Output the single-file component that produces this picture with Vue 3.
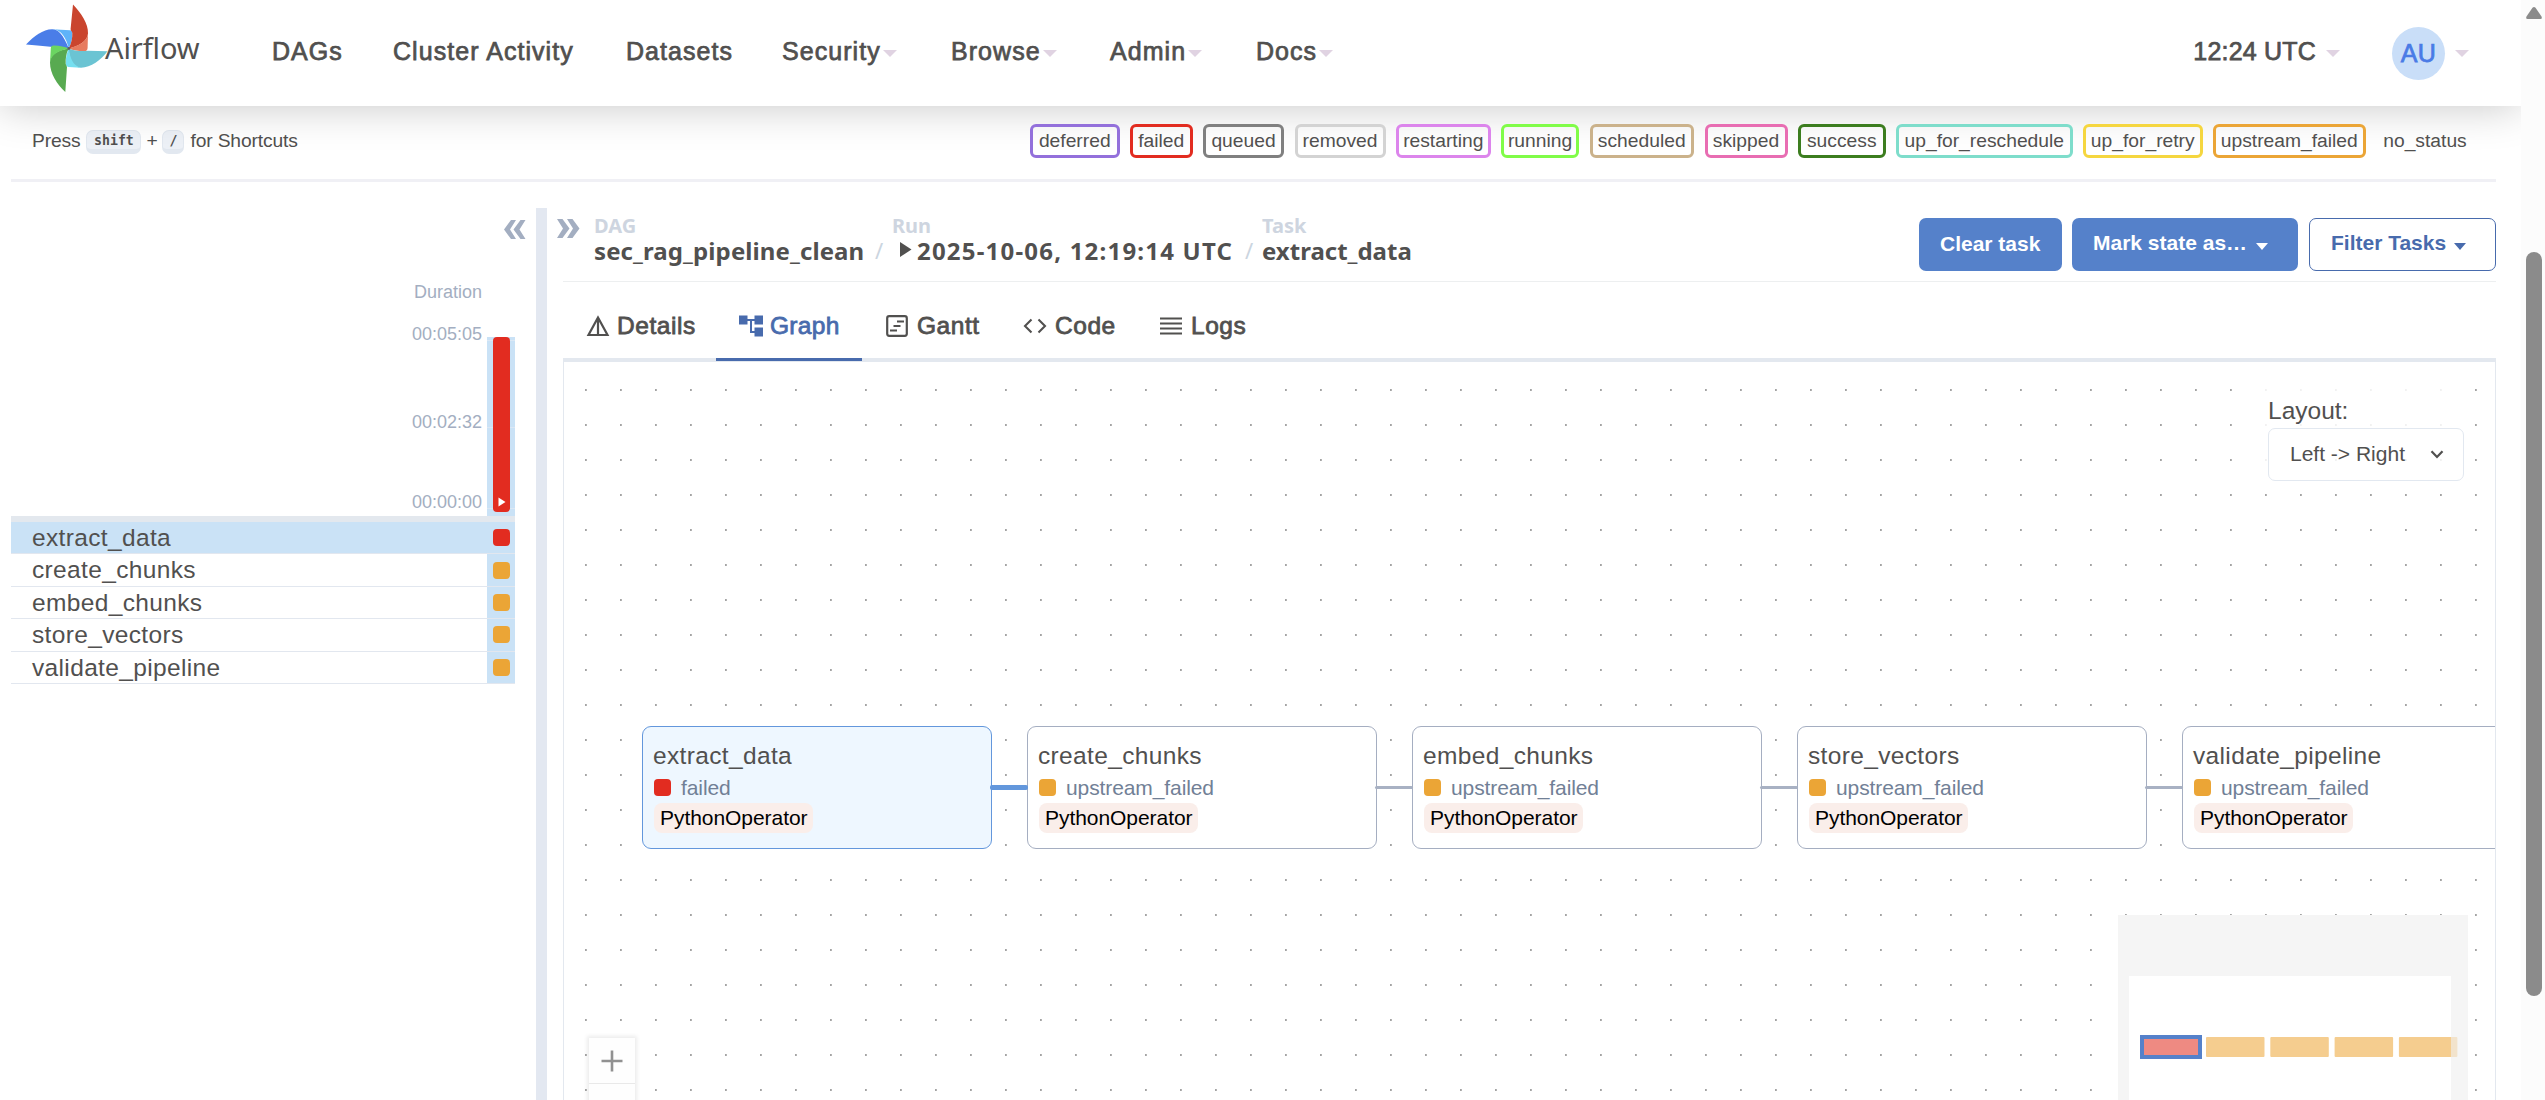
<script setup>
const nav = [
  { label: 'DAGs', width: 121 },
  { label: 'Cluster Activity', width: 233 },
  { label: 'Datasets', width: 156 },
  { label: 'Security', width: 169, caret: true },
  { label: 'Browse', width: 159, caret: true },
  { label: 'Admin', width: 146, caret: true },
  { label: 'Docs', width: 120, caret: true },
]

const states = [
  { name: 'deferred', color: '#9370db', width: 89.5 },
  { name: 'failed', color: '#e22c20', width: 62.5 },
  { name: 'queued', color: '#808080', width: 81 },
  { name: 'removed', color: '#d3d3d3', width: 91 },
  { name: 'restarting', color: '#dc85ec', width: 94.5 },
  { name: 'running', color: '#80fc48', width: 78 },
  { name: 'scheduled', color: '#cbb28b', width: 104.5 },
  { name: 'skipped', color: '#e86db2', width: 83 },
  { name: 'success', color: '#3c7d1f', width: 87.5 },
  { name: 'up_for_reschedule', color: '#7eddcb', width: 176.5 },
  { name: 'up_for_retry', color: '#f5d63f', width: 119.5 },
  { name: 'upstream_failed', color: '#eba536', width: 152.5 },
  { name: 'no_status', color: 'transparent', width: 98 },
]

const tasks = [
  { name: 'extract_data', state: 'failed' },
  { name: 'create_chunks', state: 'upstream_failed' },
  { name: 'embed_chunks', state: 'upstream_failed' },
  { name: 'store_vectors', state: 'upstream_failed' },
  { name: 'validate_pipeline', state: 'upstream_failed' },
]

// Graph coordinates are relative to the canvas' inner top-left corner.
const nodeX = (i) => 78 + i * 385
const edges = [0, 1, 2, 3].map((i) => ({ x: nodeX(i) + 348, selected: i === 0 }))
</script>

<template>
  <div class="window">
    <main class="page">
      <header class="navbar">
        <div class="brand">
          <svg class="logo" width="84" height="92" viewBox="25 3 84 92">
            <path d="M26 44.600C34 36 43 29.500 52 29.300C58 29.200 63 34 68.800 48.500C54 47 42 46 26 44.600Z" fill="#4a7de8" />
            <path d="M52 29.300L70 30.200Q72.500 30.500 72.300 34C72.300 40 71 44 68.800 48.500C66 38 62 30 52 29.300Z" fill="#5fb3f9" />
            <path d="M73 4.600C81 13 88.500 24 88 33.500C87.500 41 79 46 68.800 48.500C71.500 43 72.500 38 72.300 33C72 31 70.600 31 70.600 29Z" fill="#ca452e" />
            <path d="M88 33.500L87.600 48Q87.300 51.500 84 51.300C78 51.200 73 50.500 68.800 48.500C79 45 87 42 88 33.500Z" fill="#e77b5f" />
            <path d="M107.500 51.200C101 60 91 67.600 81 67.700C73 67.500 69 60 68.800 48.500C75 51.500 82 51.300 88 50.800Z" fill="#6bc4d3" />
            <path d="M81 67.700L68.500 67Q65.500 66.500 65.700 63C65.800 57 67 52 68.800 48.500C70 58 73 66 81 67.700Z" fill="#75dff0" />
            <path d="M65.300 92C57 84 50 74 50 62.500C50 54 58 50.500 68.800 48.500C66 53 65.500 59 65.700 64L67 67Z" fill="#58aa51" />
            <path d="M50 62.500L50.800 48Q51 45.200 54 45.400C60 45.600 65 46.500 68.800 48.500C60 50.500 51 54 50 62.500Z" fill="#6bd562" />
            <circle cx="68.800" cy="48.500" r="1.400" fill="#5b5b62" />
          </svg>
          <span class="brand-name">Airflow</span>
        </div>
        <nav class="menu">
          <a v-for="n in nav" :key="n.label" class="menu-item" :style="{ width: n.width + 'px' }">
            <span>{{ n.label }}</span><i v-if="n.caret" class="caret"></i>
          </a>
        </nav>
        <div class="clock"><span>12:24 UTC</span><i class="caret"></i></div>
        <div class="user"><span class="avatar">AU</span><i class="caret"></i></div>
      </header>

      <section class="legend">
        <div class="shortcuts">
          <span>Press</span><kbd class="kbd-shift">shift</kbd><span class="plus">+</span><kbd class="kbd-slash">/</kbd><span>for Shortcuts</span>
        </div>
        <div class="states">
          <span v-for="s in states" :key="s.name" class="state" :style="{ borderColor: s.color, width: s.width + 'px' }">{{ s.name }}</span>
        </div>
      </section>

      <section class="content">
        <aside class="grid-view">
          <svg class="collapse" width="22" height="19" viewBox="0 0 22 19"><path d="M7 0h5L6 9.500l6 9.500H7L0 9.500zM16.500 0H21.500l-6 9.500 6 9.500h-5L9.500 9.500z" fill="#a3aec1" /></svg>
          <div class="chart">
            <div class="axis">
              <span class="axis-title">Duration</span>
              <span class="tick-max">00:05:05</span>
              <span class="tick-mid">00:02:32</span>
              <span class="tick-min">00:00:00</span>
            </div>
            <div class="run-column">
              <div class="run-bar">
                <svg width="8" height="10" viewBox="0 0 8 10"><path d="M.5.500v9l7-4.500z" fill="#fff" /></svg>
              </div>
            </div>
          </div>
          <div class="rows">
            <div v-for="(t, i) in tasks" :key="t.name" class="row" :class="{ active: i === 0 }">
              <span class="row-name">{{ t.name }}</span>
              <span class="cell"><i class="box" :class="t.state"></i></span>
            </div>
          </div>
        </aside>

        <div class="splitter"></div>

        <article class="details">
          <div class="heading">
            <svg class="expand" width="23" height="19" viewBox="0 0 23 19"><path d="M0 0h5.500l7 9.500-7 9.500H0l6-9.500zM10 0h5.500l7 9.500-7 9.500H10l6-9.500z" fill="#a3aec1" /></svg>
            <div class="crumbs">
              <div class="crumb c-dag"><span class="crumb-label">DAG</span><strong>sec_rag_pipeline_clean</strong></div>
              <span class="slash s1">/</span>
              <div class="crumb c-run">
                <span class="crumb-label">Run</span>
                <strong><svg class="manual" width="13" height="15" viewBox="0 0 13 15"><path d="M1 0v15L12.500 7.500z" fill="#51504f" /></svg>2025-10-06, 12:19:14 UTC</strong>
              </div>
              <span class="slash s2">/</span>
              <div class="crumb c-task"><span class="crumb-label">Task</span><strong>extract_data</strong></div>
            </div>
            <div class="actions">
              <button class="btn solid clear">Clear task</button>
              <button class="btn solid mark">Mark state as…<i class="tri"></i></button>
              <button class="btn outline filter">Filter Tasks<i class="tri"></i></button>
            </div>
          </div>

          <div class="tabs">
            <div class="tab t-details">
              <svg width="24" height="22" viewBox="0 0 24 22"><path d="M12 2.500L2.500 20h19zM12 2.500V20" fill="none" stroke="#51504f" stroke-width="2.200" /></svg><span>Details</span>
            </div>
            <div class="tab t-graph selected">
              <svg width="24" height="22" viewBox="0 0 24 22"><path d="M0 .500h8.500v9H0zM15.500.500H24v9h-8.500zM15.500 12.500H24v9h-8.500z" fill="#486bad" /><path d="M8 5h8M12 5v12h4" fill="none" stroke="#486bad" stroke-width="2" /></svg><span>Graph</span>
            </div>
            <div class="tab t-gantt">
              <svg width="22" height="22" viewBox="0 0 22 22"><rect x="1.200" y="1.200" width="19.600" height="19.600" rx="2" fill="none" stroke="#51504f" stroke-width="2.200" /><path d="M11 6.500h7M7.500 11h7M4 15.500h7" stroke="#51504f" stroke-width="2" /></svg><span>Gantt</span>
            </div>
            <div class="tab t-code">
              <svg width="24" height="16" viewBox="0 0 24 16"><path d="M8.500 1.500L2 8l6.500 6.500M15.500 1.500L22 8l-6.500 6.500" fill="none" stroke="#51504f" stroke-width="2.100" /></svg><span>Code</span>
            </div>
            <div class="tab t-logs">
              <svg width="22" height="18" viewBox="0 0 22 18"><path d="M0 1.500h22M0 6.500h22M0 11.500h22M0 16.500h22" stroke="#51504f" stroke-width="2.200" /></svg><span>Logs</span>
            </div>
          </div>

          <div class="canvas">
            <svg class="dots" width="1931" height="738">
              <defs>
                <pattern id="dot-grid" x="21" y="27" width="35" height="35" patternUnits="userSpaceOnUse">
                  <rect x="0" y="0" width="1.800" height="2" fill="#a3a3a3" />
                </pattern>
              </defs>
              <rect width="1931" height="738" fill="url(#dot-grid)" />
            </svg>

            <div v-for="(t, i) in tasks" :key="t.name" class="node" :class="{ current: i === 0 }" :style="{ left: nodeX(i) + 'px' }">
              <span class="node-name">{{ t.name }}</span>
              <span class="node-state"><i class="box" :class="t.state"></i>{{ t.state }}</span>
              <span class="operator">PythonOperator</span>
            </div>
            <i v-for="e in edges" :key="e.x" class="edge" :class="{ live: e.selected }" :style="{ left: e.x + 'px' }"></i>

            <div class="layout-panel">
              <label>Layout:</label>
              <div class="select">
                <span>Left -&gt; Right</span>
                <svg width="14" height="9" viewBox="0 0 14 9"><path d="M1.500 1.200L7 7l5.500-5.800" fill="none" stroke="#51504f" stroke-width="2.200" /></svg>
              </div>
            </div>

            <div class="controls">
              <div class="control"><svg width="22" height="22" viewBox="0 0 22 22"><path d="M11 .500v21M.5 11h21" stroke="#919191" stroke-width="2.600" /></svg></div>
              <div class="control"></div>
            </div>

            <svg class="minimap" width="350" height="185" viewBox="0 0 350 185">
              <rect width="350" height="185" fill="#fff" />
              <rect v-for="i in 4" :key="i" :x="88 + (i - 1) * 64.300" y="122" width="58.500" height="20" rx="1" fill="#f5cd8f" />
              <rect x="24" y="122" width="58" height="20" fill="#ee8a82" stroke="#5581ca" stroke-width="4" />
              <path d="M0 0h350v185H0zM11 61v124h322V61z" fill="#f0f0f0" fill-opacity=".64" fill-rule="evenodd" />
            </svg>
          </div>
        </article>
      </section>
    </main>

    <div class="scrollbar">
      <svg class="scroll-up" width="16" height="13" viewBox="0 0 16 13"><path d="M6.500.800Q8-.6 9.500.800L15.500 9.500Q16.500 12 14.500 12H1.500Q-.5 12 .5 9.500Z" fill="#8b8b8b" /></svg>
      <div class="thumb"></div>
    </div>
  </div>
</template>

<style>
body { background: #fff; overflow: hidden; }
</style>

<style scoped>
* { box-sizing: border-box; }
.window {
  display: flex;
  width: 2545px;
  height: 1100px;
  overflow: hidden;
  background: #fff;
  color: #51504f;
  font-family: "Liberation Sans", Arial, sans-serif;
  white-space: nowrap;
}
.page { width: 2521px; height: 1100px; overflow: hidden; display: flex; flex-direction: column; }
i { display: inline-block; font-style: normal; }

.navbar {
  position: relative;
  flex: none;
  display: flex;
  align-items: center;
  height: 106px;
  background: #fff;
  box-shadow: 0 0 44px rgba(0, 0, 0, .23);
  font-size: 25px;
  -webkit-text-stroke: .75px #51504f;
}
.brand { display: flex; align-items: flex-start; width: 272px; height: 100%; padding: 3px 0 0 25px; -webkit-text-stroke: 0; }
.logo { flex: none; }
.brand-name { margin: 25px 0 0 -4px; font: 29px/40px "Noto Sans", sans-serif; letter-spacing: -.1px; }
.menu { display: flex; padding-bottom: 3px; }
.menu-item { display: flex; align-items: center; letter-spacing: 1.050px; }
.caret { width: 0; height: 0; border: 7px solid transparent; border-top: 7px solid #e0d3e2; border-bottom: 0; margin: 4px 0 0 2px; }
.clock { display: flex; align-items: center; margin-left: auto; padding-bottom: 3px; letter-spacing: .2px; }
.clock .caret { margin-left: 10px; }
.user { display: flex; align-items: center; margin: 0 52px 0 52px; }
.user .caret { margin: 1px 0 0 10px; }
.avatar {
  width: 53px; height: 53px; border-radius: 50%; background: #c9def8; color: #4a7be6;
  -webkit-text-stroke: .75px #4a7be6; text-align: center; line-height: 53px; letter-spacing: .3px;
}

.legend {
  flex: none;
  display: flex;
  justify-content: space-between;
  align-items: flex-start;
  height: 76px;
  margin: 0 25px 0 11px;
  padding: 18px 22px 0;
  border-bottom: 3px solid #f0f0f5;
  font-size: 19.25px;
}
.shortcuts { display: flex; align-items: center; height: 33px; margin-left: -1px; letter-spacing: -.15px; }
kbd {
  height: 24px; margin-top: 2px; border: 1px solid #e2e8f0; border-bottom-width: 5px; border-radius: 7px;
  background: #edf1f7; font: bold 13.200px/19px "DejaVu Sans Mono", monospace; text-align: center; letter-spacing: 0;
}
.kbd-shift { width: 55px; margin-left: 6px; }
.plus { width: 21px; text-align: center; }
.kbd-slash { width: 22px; margin-right: 6px; }
.states { display: flex; gap: 10.500px; }
.state {
  position: relative;
  height: 34px; border: 3px solid; border-radius: 6px; line-height: 27px; text-align: center;
}

.content { flex: 1; display: flex; padding: 26px 25px 0 11px; }
.grid-view { width: 504px; display: flex; flex-direction: column; }
.collapse { align-self: flex-end; margin: 12px -11px 0 0; }
.chart { display: flex; justify-content: flex-end; height: 277px; }
.axis { display: flex; flex-direction: column; width: 75px; padding-top: 43px; margin-right: 5px; font-size: 18px; line-height: 20px; color: #a3aec1; }
.axis span { text-align: right; }
.tick-max { margin-top: 22px; }
.tick-mid { margin-top: 68px; }
.tick-min { margin-top: 60px; }
.run-column {
  width: 28px; height: 179px; margin-top: 98px; padding-left: 6px;
  background:
    linear-gradient(#dbe8f5, #dbe8f5) 0 3px / 100% 1px no-repeat,
    linear-gradient(#dbe8f5, #dbe8f5) 0 90px / 100% 1px no-repeat,
    linear-gradient(#dbe8f5, #dbe8f5) 0 171px / 100% 1px no-repeat, #cae2f6;
}
.run-bar { display: flex; align-items: flex-end; justify-content: center; width: 17px; height: 175px; padding-bottom: 5px; border-radius: 4px; background: #e22c20; }
.rows { border-top: 6px solid #e3e8ee; }
.row { display: flex; height: 32.400px; border-bottom: 1px solid #e2e7ef; font-size: 24.500px; letter-spacing: .35px; }
.row.active { background: #cae2f6; }
.row-name { flex: 1; padding-left: 21px; line-height: 31px; }
.cell { display: flex; align-items: center; width: 28px; padding-left: 6px; background: #cae2f6; }
.box { width: 17px; height: 17px; border-radius: 4px; }
.box.failed { background: #e22c20; }
.box.upstream_failed { background: #eba536; }
.splitter { width: 11px; margin-left: 21px; background: #e3e8f1; }

.details { flex: 1; display: flex; flex-direction: column; margin-left: 16px; }
.heading { display: flex; height: 74px; border-bottom: 1px solid #edeff0; }
.expand { flex: none; margin: 11px 14px 0 -6px; }
.crumbs { display: flex; padding-top: 6px; font-family: "Noto Sans", sans-serif; }
.crumb { display: flex; flex-direction: column; line-height: 24.500px; }
.crumb strong { font-size: 24px; font-weight: 700; }
.crumb-label { font-size: 20px; font-weight: 700; color: #ced5e0; letter-spacing: 0; }
.c-dag { width: 281px; letter-spacing: .1px; }
.c-run { width: 353px; letter-spacing: 1.200px; }
.c-run strong { padding-left: 7px; }
.manual { margin: 0 5px 3px 0; }
.slash { width: 17px; padding-top: 24px; font-size: 22px; line-height: 24px; color: #cbd5e0; }
.actions { display: flex; gap: 10px; margin: 10px 0 0 auto; }
.btn {
  display: flex; align-items: center; height: 53px; border: 0; border-radius: 7px; padding: 0 0 4px 21px;
  font: bold 21px "Liberation Sans", Arial, sans-serif;
}
.solid { background: #5581ca; color: #fff; }
.clear { width: 143px; padding-bottom: 1px; }
.mark { width: 226px; }
.filter { width: 187px; margin-left: 1px; }
.outline { border: 1.500px solid #486bad; background: #fff; color: #486bad; }
.tri { border: 6.500px solid transparent; border-top: 7px solid currentColor; border-bottom: 0; margin: 7px 0 0 9px; }
.filter .tri { margin-left: 8px; }

.tabs { display: flex; height: 80px; border-bottom: 4px solid #e3e8ef; font-size: 24.500px; -webkit-text-stroke: .8px currentColor; letter-spacing: .55px; }
.tab { display: flex; align-items: center; height: 80px; padding: 8px 0 0 23px; }
.tab svg { flex: none; margin-right: 7px; }
.t-details { width: 153px; }
.t-graph { width: 146px; height: 79px; padding-top: 12px; border-bottom: 3px solid #486bad; color: #486bad; letter-spacing: .3px; }
.t-gantt { padding-left: 24px; width: 138px; }
.t-gantt svg { margin-right: 9px; }
.t-code { width: 137px; }
.t-code svg { margin-right: 8px; }
.t-logs svg { margin-right: 9px; }

.canvas { position: relative; flex: 1; overflow: hidden; border: 1px solid #e3e8ef; border-top: 0; border-bottom: 0; }
.dots { display: block; }
.node {
  position: absolute; top: 364px; display: flex; flex-direction: column; align-items: flex-start;
  width: 350px; height: 123px; padding: 12px 0 0 11px; border: 1.500px solid #a5aec1; border-radius: 9px; background: #fff;
}
.node.current { border-color: #6397dc; background: #eef7ff; }
.node-name { height: 35px; margin-left: -1px; font-size: 24.500px; line-height: 33px; letter-spacing: .35px; }
.node-state { display: flex; align-items: center; height: 27px; font-size: 21px; line-height: 24px; color: #718096; letter-spacing: -.1px; }
.node-state .box { margin-right: 10px; }
.operator { height: 30px; margin-top: 2px; padding: 0 5px 0 6px; border-radius: 8px; background: #faeeea; color: #000; font-size: 21px; line-height: 29px; letter-spacing: -.05px; }
.edge { position: absolute; top: 424px; width: 38px; height: 3px; border-radius: 2px; background: #a8b1c3; }
.edge.live { top: 423px; height: 5px; background: #6397dc; }
.layout-panel { position: absolute; top: 23px; left: 1697px; width: 210px; height: 105px; padding: 11px 0 0 7px; background: rgba(255, 255, 255, .85); }
.layout-panel label { display: block; font-size: 24.500px; line-height: 29px; }
.select { display: flex; align-items: center; width: 196px; height: 53px; margin-top: 3px; padding: 0 19px 1px 21px; border: 1px solid #e2e8f0; border-radius: 7px; justify-content: space-between; font-size: 21px; }
.controls { position: absolute; top: 676px; left: 25px; width: 46px; box-shadow: 0 0 4px 2px rgba(0, 0, 0, .08); }
.control { display: flex; align-items: center; justify-content: center; height: 46px; border-bottom: 1px solid #e9e9e9; background: #fefefe; }
.minimap { position: absolute; top: 553px; left: 1554px; }

.scrollbar { display: flex; flex-direction: column; width: 24px; padding: 7px 0 0 5px; background: #fcfcfc; }
.thumb { width: 16px; height: 744px; margin-top: 232px; border-radius: 8px; background: #8b8b8b; }
</style>
